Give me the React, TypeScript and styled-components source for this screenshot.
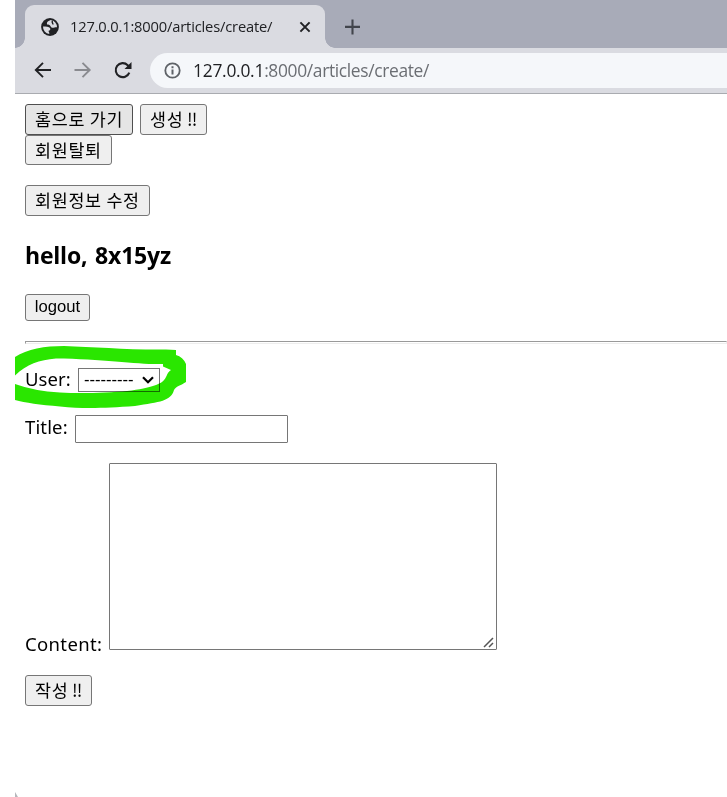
import React from 'react';
import styled, { createGlobalStyle } from 'styled-components';

const Global = createGlobalStyle`
  * { box-sizing: border-box; }
  html, body { margin: 0; background: #fff; overflow: hidden; }
  body { font-family: "Noto Sans", "Noto Sans CJK KR", sans-serif; color: #000; }
`;

const Window = styled.div`
  position: relative;
  margin-left: 15px;
  height: 797px;
  overflow: hidden;
  background: #fff;
`;

const TabStrip = styled.div`
  display: flex;
  height: 48px;
  padding: 5px 0 0 10px;
  background: #a8abb8;
`;

const Tab = styled.div`
  position: relative;
  display: flex;
  align-items: center;
  width: 300px;
  height: 43px;
  padding: 0 13px 0 15px;
  border-radius: 9px 9px 0 0;
  background: #dadbe1;

  &::before, &::after {
    content: "";
    position: absolute;
    bottom: 0;
    width: 10px;
    height: 10px;
  }
  &::before { left: -10px; background: radial-gradient(circle at 0 0, #a8abb8 9.5px, #dadbe1 10px); }
  &::after { right: -10px; background: radial-gradient(circle at 100% 0, #a8abb8 9.5px, #dadbe1 10px); }
`;

const Line = styled.span<{ $size: number; $spacing?: number; $color?: string }>`
  display: inline-block;
  font-family: "Open Sans", "Noto Sans", sans-serif;
  font-size: ${p => p.$size}px;
  letter-spacing: ${p => p.$spacing ?? 0}px;
  color: ${p => p.$color ?? '#202124'};
  white-space: nowrap;
  line-height: 24px;
`;

const TabTitle = styled(Line)`
  margin: 0 0 1px 10px;
`;

const Icon = styled.svg`
  display: block;
  flex: none;
`;

const CloseIcon = styled(Icon)`
  margin-left: auto;
`;

const PlusIcon = styled(Icon)`
  margin: 14px 0 0 20px;
`;

const Toolbar = styled.div`
  display: flex;
  align-items: center;
  height: 46px;
  padding: 0 0 1px 18px;
  border-bottom: 1px solid #a9abb0;
  background: #dadbe1;
`;

const NavIcons = styled.div`
  display: flex;
  gap: 20px;
  width: 117px;
  padding-bottom: 1px;
`;

const AddressBar = styled.div`
  display: flex;
  align-items: center;
  flex: 1;
  height: 35px;
  padding-left: 13px;
  gap: 11px;
  border-radius: 18px 0 0 18px;
  background: #f5f7fa;
`;

const Page = styled.main`
  padding: 10px 0 0 10px;
`;

const Row = styled.div<{ $top?: number; $gap?: number; $align?: string }>`
  display: flex;
  align-items: ${p => p.$align ?? 'flex-start'};
  gap: ${p => p.$gap ?? 7}px;
  margin-top: ${p => p.$top ?? 0}px;
`;

const Button = styled.button<{ $w: number; $h?: number; $hover?: boolean; $latin?: boolean }>`
  display: block;
  width: ${p => p.$w}px;
  height: ${p => p.$h ?? 31}px;
  padding: 0 0 1px ${p => (p.$latin ? 0 : 9)}px;
  border: 1px solid ${p => (p.$hover ? '#4f4f4f' : '#767676')};
  border-radius: 3px;
  background: ${p => (p.$hover ? '#e5e5e5' : '#efefef')};
  color: #000;
  font-family: ${p => (p.$latin ? '"Liberation Sans"' : '"Noto Sans CJK KR"')}, sans-serif;
  font-weight: 400;
  font-size: ${p => (p.$latin ? 16.67 : 17.4)}px;
  letter-spacing: ${p => (p.$latin ? 0 : 0.7)}px;
  text-align: ${p => (p.$latin ? 'center' : 'left')};
  line-height: 24px;
  white-space: nowrap;
`;

const Bangs = styled.span`
  margin-left: -1px;
  letter-spacing: -0.8px;
`;

const Greeting = styled.h2`
  margin: 22px 0 0;
  height: 35px;
  font-size: 23px;
  line-height: 34px;
  font-weight: 700;
  letter-spacing: -0.2px;
  word-spacing: 2px;
  font-family: "Open Sans", "Noto Sans", sans-serif;
`;

const Divider = styled.hr`
  height: 3px;
  margin: 20px 0 0;
  border: 1px solid;
  border-color: #9a9a9a #eee #eee #9a9a9a;
`;

const Label = styled.label<{ $w: number; $spacing?: number; $lift?: number }>`
  width: ${p => p.$w}px;
  margin: ${p => -(p.$lift ?? 0)}px 0 ${p => p.$lift ?? 0}px;
  font-size: 18.5px;
  line-height: 26px;
  letter-spacing: ${p => p.$spacing ?? 0}px;
  white-space: nowrap;
`;

const Select = styled.div`
  display: flex;
  align-items: center;
  justify-content: space-between;
  width: 82px;
  height: 24px;
  padding: 0 5px;
  border: 1px solid #767676;
  font-family: "Liberation Sans", sans-serif;
  font-size: 16.67px;
  letter-spacing: -0.05px;
`;

const Input = styled.input`
  width: 213px;
  height: 28px;
  border: 1px solid #767676;
  border-radius: 1px;
  outline: 0;
`;

const AreaFrame = styled.div`
  display: flex;
  position: relative;
  width: 388px;
  height: 187px;
`;

const Area = styled.textarea`
  width: 100%;
  height: 100%;
  border: 1px solid #767676;
  border-radius: 1px;
  resize: none;
  outline: 0;
`;

const Grip = styled.svg`
  position: absolute;
  right: 3px;
  bottom: 2px;
`;

const Marker = styled.svg`
  position: absolute;
  left: 0;
  top: 340px;
  mix-blend-mode: multiply;
  pointer-events: none;
`;

const CornerMark = styled.svg`
  position: absolute;
  left: 0;
  bottom: 0;
`;

export default function App() {
  return (
    <>
      <Global />
      <Window>
        <TabStrip>
          <Tab>
            <Icon width="20" height="20" viewBox="0 0 20 20">
              <circle cx="10" cy="10" r="8.9" fill="#202124" />
              <path d="M10.800 3C8.200 4 6.700 5 6.900 6.800C7.100 8 8.800 7.600 9.800 8.200C11 8.900 10.600 10.400 12 10.700C13.800 11.100 14.500 10.200 17 10.300A7.100 7.100 0 0 0 10.800 3ZM3 9.600C6 9.600 9 9.700 10 11C10.900 12.300 10 13.500 8.600 13.700C8.200 14.500 9.600 14.900 9.300 17A7.100 7.100 0 0 1 3 9.600Z" fill="#dadbe1" />
              <path d="M12.500 3.500C11.400 5.500 13 6.200 13 7.500" fill="none" stroke="#202124" strokeWidth="1.4" />
            </Icon>
            <TabTitle $size={14.7} $spacing={-0.17}>127.0.0.1:8000/articles/create/</TabTitle>
            <CloseIcon width="14" height="14" viewBox="0 0 14 14">
              <path d="M2.4 2.4l9.2 9.2M11.6 2.4l-9.2 9.2" stroke="#202124" strokeWidth="2" />
            </CloseIcon>
          </Tab>
          <PlusIcon width="16" height="16" viewBox="0 0 16 16">
            <path d="M7.5 0.5v15M0 7.9h15" stroke="#42454c" strokeWidth="2.1" />
          </PlusIcon>
        </TabStrip>
        <Toolbar>
          <NavIcons>
            <Icon width="20" height="20" viewBox="0 0 20 20" fill="none" stroke="#202124" strokeWidth="1.9">
              <path d="M18 10H3.5M10 2.8L2.8 10l7.2 7.2" />
            </Icon>
            <Icon width="20" height="20" viewBox="0 0 20 20" fill="none" stroke="#898a8f" strokeWidth="1.9">
              <path d="M1.5 10H16M9.5 2.8l7.2 7.2-7.2 7.2" />
            </Icon>
            <Icon width="20" height="20" viewBox="0 0 20 20">
              <path d="M16.300 12.600A7 7 0 1 1 14.700 5.200L16.200 6.700" fill="none" stroke="#202124" strokeWidth="2.1" />
              <path d="M18.500 2v7h-7z" fill="#202124" />
            </Icon>
          </NavIcons>
          <AddressBar>
            <Icon width="19" height="19" viewBox="0 0 19 19" fill="none" stroke="#5f6368" strokeWidth="1.8">
              <circle cx="9.5" cy="9.5" r="7.2" />
              <path d="M9.5 8.4v5M9.5 5.2v2" strokeWidth="2" />
            </Icon>
            <Line $size={17.4} $spacing={-0.34} $color="#6b6e73">
              <Line $size={17.4} $spacing={-0.25}>127.0.0.1</Line>:8000/articles/create/
            </Line>
          </AddressBar>
        </Toolbar>
        <Page>
          <Row>
            <Button $w={108} $hover>홈으로 가기</Button>
            <Button $w={67}>생성 <Bangs>!!</Bangs></Button>
          </Row>
          <Button $w={87} $h={30}>회원탈퇴</Button>
          <Row $top={20}>
            <Button $w={125}>회원정보 수정</Button>
          </Row>
          <Greeting>hello, 8x15yz</Greeting>
          <Row $top={21}>
            <Button $w={65} $h={27} $latin>logout</Button>
          </Row>
          <Divider />
          <Row $top={24} $gap={0}>
            <Label $w={53} $lift={2} $spacing={0.1}>User:</Label>
            <Select>
              <span>---------</span>
              <Icon width="12" height="8" viewBox="0 0 12 8">
                <path d="M1 1.2l5 5 5-5" fill="none" stroke="#000" strokeWidth="2.2" />
              </Icon>
            </Select>
          </Row>
          <Row $top={21} $gap={0}>
            <Label $w={50} $lift={1} $spacing={0.15}>Title:</Label>
            <Input />
          </Row>
          <Row $top={20} $gap={0} $align="flex-end">
            <Label $w={84} $lift={-7} $spacing={0.35}>Content:</Label>
            <AreaFrame>
              <Area />
              <Grip width="11" height="11" viewBox="0 0 11 11">
                <path d="M1 10L10 1M6 10l4-4" stroke="#555" strokeWidth="1.5" />
              </Grip>
            </AreaFrame>
          </Row>
          <Row $top={25}>
            <Button $w={67}>작성 <Bangs>!!</Bangs></Button>
          </Row>
        </Page>
        <Marker width="180" height="75" viewBox="15 340 180 75">
          <path
            fill="#2ae600"
            d="M15 357C27 349 45 346 64 346C94 347 130 350 166 349.500L176 350V355Q183 357 186 364V382C180 386 176 386 174 390C171 401 160 402 135 406C105 408 85 409 60 406.500Q30 404 15 400V384Q34 391 60 392.500Q80 393.500 105 392.500C139 391 154 387 162 382C168 377 166 373 171 370L163 366.500V364C142 365 104 359 56 358.500C39 360 27 364 15 375.500Z"
          />
        </Marker>
        <CornerMark width="4" height="5" viewBox="0 0 4 5">
          <path d="M0 0L3 5H0Z" fill="#b5b7bb" />
        </CornerMark>
      </Window>
    </>
  );
}
